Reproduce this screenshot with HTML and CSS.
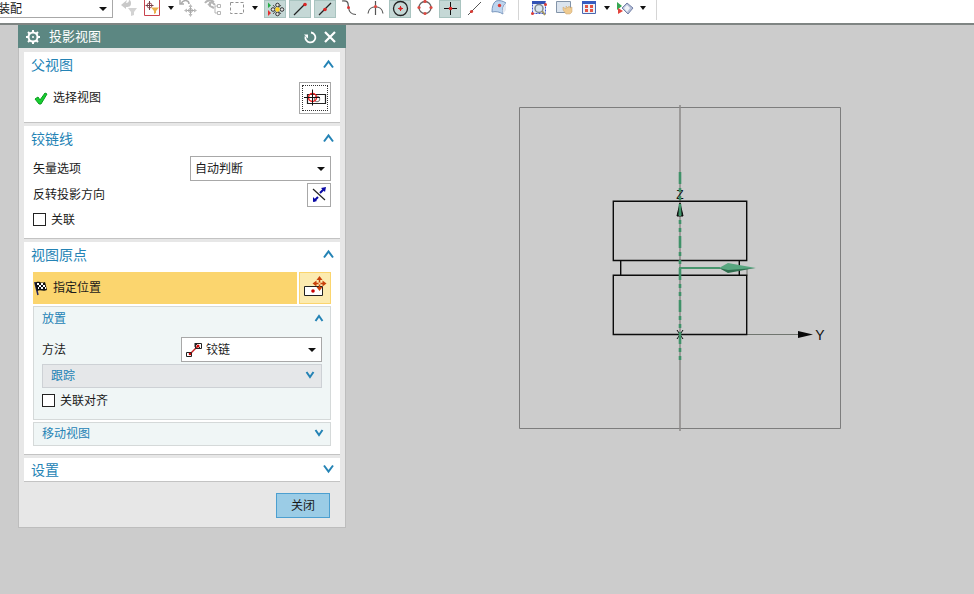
FILE: index.html
```html
<!DOCTYPE html>
<html lang="zh-CN">
<head>
<meta charset="utf-8">
<title>投影视图</title>
<link rel="stylesheet" href="styles.css">
</head>
<body>
<header class="toolbar">
  <span class="combo scope"><select aria-label="选择范围"><option>装配</option></select></span>
  <div class="tools filters">
    <button class="tool" aria-label="重置过滤器"><svg viewBox="0 0 22 18"><path d="M9 0 3 5l5 4V7c4 0 5-1 5-4 0-2-1-3-2-3 0 2-1 3-3 3z" fill="#c9c9c9"/><path d="M10 8h9l-3 4v3l-3 1v-4z" fill="#d3d3d3"/></svg></button>
    <button class="tool" aria-label="选择过滤器"><svg viewBox="0 0 22 18"><path d="M2.500-2h15v17.500h-15z" fill="#fff" stroke="#c9434e"/><circle cx="7.500" cy="5.500" r="2.500" fill="none" stroke="#a05058"/><path d="M7.500 1v9M3.500 5.500h8" stroke="#704048"/><path d="M9 7.500h8l-3 3.500v2l-2 1v-3z" fill="#eab04a"/></svg></button>
    <button class="caret" aria-label="更多过滤器"></button>
    <button class="tool" aria-label="重新定向"><svg viewBox="0 0 22 18" fill="none" stroke="#aaa"><path d="M3 4c2-5 8-4 8 0M2 0v4h4" stroke-width="1.500"/><path d="M12.500 5v11M7 10.500h11"/><path d="m12.500 4 2 3h-4zM12.500 17l2-3h-4zM6 10.500l3-2v4zM19 10.500l-3-2v4z" fill="#bbb" stroke="none"/><circle cx="12.500" cy="10.500" r="2"/></svg></button>
    <button class="tool" aria-label="装配导航"><svg viewBox="0 0 22 18" fill="none" stroke="#b5b5b5"><path d="M3 3c3-4 6-3 9-1M6 5l4-3 3 3M8 2v4l4 2" stroke-width="2"/><path d="M15.500 4.500h3v3h-3zM15.500 11.500h3v3h-3zM13 6h3M13 6v7h2"/></svg></button>
    <button class="tool" aria-label="矩形选择"><svg viewBox="0 0 22 18"><path d="M4.500 2.500h13v11h-13z" fill="none" stroke="#929292" stroke-dasharray="3 2"/></svg></button>
    <button class="caret" aria-label="更多选择方式"></button>
  </div>
  <div class="tools snaps">
    <button class="tool on" aria-label="启用捕捉点"><svg viewBox="0 0 22 18"><path d="M4 2.500 7 5.500 4 8z" fill="#24ad45"/><path d="M4 10 7 13l-3 3z" fill="#e42d2d"/><path d="m9 5 8 9m0-9-8 9" stroke="#555"/><g fill="#e4e4e4" stroke="#333"><circle cx="13.500" cy="5" r="1.800"/><circle cx="13.500" cy="14" r="1.800"/><circle cx="9" cy="9.500" r="1.800"/><circle cx="18" cy="9.500" r="1.800"/></g><circle cx="13.500" cy="9.500" r="2.200" fill="#ffd323"/></svg></button>
    <button class="tool on" aria-label="端点"><svg viewBox="0 0 22 18"><path d="m5 15 11-11" stroke="#222" stroke-width="1.200"/><circle cx="16" cy="4.500" r="1.800" fill="#db2424"/></svg></button>
    <button class="tool on" aria-label="中点"><svg viewBox="0 0 22 18"><path d="m5 15 12-12" stroke="#222" stroke-width="1.200"/><circle cx="11" cy="9.500" r="1.800" fill="#db2424"/></svg></button>
    <button class="tool" aria-label="控制点"><svg viewBox="0 0 22 18"><path d="M3 1c7-1 6 3 6.500 6.500S11 14.500 17 14.500" fill="none" stroke="#555" stroke-width="1.200"/><circle cx="9.500" cy="7.500" r="1.500" fill="#db3434"/></svg></button>
    <button class="tool" aria-label="交点"><svg viewBox="0 0 22 18"><path d="M11.500 1v14M4 13.500c1-9 14-9 15 0" fill="none" stroke="#555" stroke-width="1.200"/><circle cx="11.500" cy="6.500" r="1.600" fill="#e34b45"/></svg></button>
    <button class="tool on" aria-label="圆弧中心"><svg viewBox="0 0 22 18"><circle cx="11.500" cy="8.500" r="7" fill="none" stroke="#222" stroke-width="1.300"/><path d="M11.500 6v5M9 8.500h5" stroke="#db2424"/><circle cx="11.500" cy="8.500" r="1.500" fill="#db2424"/></svg></button>
    <button class="tool" aria-label="象限点"><svg viewBox="0 0 22 18"><circle cx="11" cy="7.500" r="6" fill="none" stroke="#666" stroke-width="1.300"/><g fill="#dc4a43"><circle cx="11" cy="1.500" r="1.600"/><circle cx="11" cy="13.500" r="1.600"/><circle cx="5" cy="7.500" r="1.600"/><circle cx="17" cy="7.500" r="1.600"/></g></svg></button>
    <button class="tool on" aria-label="现有点"><svg viewBox="0 0 22 18"><path d="M11.500 2v13M5 8.500h13" stroke="#111"/><circle cx="11.500" cy="8.500" r="1.800" fill="#db2424"/></svg></button>
    <button class="tool" aria-label="曲线上的点"><svg viewBox="0 0 22 18"><path d="M4 15 17 2" stroke="#555"/><circle cx="7.500" cy="11.500" r="1.600" fill="#dc3a32"/></svg></button>
    <button class="tool" aria-label="曲面上的点"><svg viewBox="0 0 22 18"><path d="M7 1c4-1 7 0 10 2-3 2-4 6-3 11-3-2-7-3-11-2 0-5 1-9 4-11z" fill="#bdd4ee" stroke="#7896bd"/><path d="M14 14c-1-4 0-8 3-11v7z" fill="#e6eaf2"/><circle cx="10.500" cy="5.500" r="1.700" fill="#dc3a32"/></svg></button>
  </div>
  <div class="tools views">
    <button class="tool" aria-label="缩放窗口"><svg viewBox="0 0 22 18"><path d="M4.500 1.500h13v12h-13z" fill="#e8eef8" stroke="#3a50d0" stroke-dasharray="2 1"/><path d="M4 1h13v3H4z" fill="#3152b5"/><circle cx="11" cy="8.500" r="4" fill="#d9e5ee" stroke="#7c8791" stroke-width="1.500"/><path d="m14 11 3 4" stroke="#9f9466" stroke-width="2"/><circle cx="4.500" cy="13.500" r="1.500" fill="#d93c38"/><circle cx="17.500" cy="4.500" r="1.500" fill="#d93c38"/></svg></button>
    <button class="tool" aria-label="平移"><svg viewBox="0 0 22 18"><path d="M3.500 1.500h14v11h-14z" fill="#dbe4ee" stroke="#8394a9"/><path d="m10 7 3 2V6l2 2 1-2 1 2 2-1v5l-2 2h-4l-3-4z" fill="#efcb91" stroke="#c8a36c" stroke-width=".5"/></svg></button>
    <button class="tool" aria-label="适合窗口"><svg viewBox="0 0 22 18"><path d="M4.500 1.500h13v12h-13z" fill="#edf2fa" stroke="#4a65ae"/><path d="M4 1h14v3H4z" fill="#375cc0"/><g fill="#e35445"><path d="M7 5h3v3H7zM12 5h3v3h-3zM7 9h3v3H7zM12 9h3v3h-3z"/></g></svg></button>
    <button class="caret" aria-label="更多视图操作"></button>
    <button class="tool" aria-label="渲染样式"><svg viewBox="0 0 22 18"><path d="m3 2 5 4-5 4z" fill="#35a651"/><path d="m4 8 5 3-5 3z" fill="#e2453e"/><path d="m13 3 6 5-5 6-6-6z" fill="#b5bfd8" stroke="#7481a8"/><path d="m13 5 3 3-3 4-3-4z" fill="#f0f2f8"/></svg></button>
    <button class="caret" aria-label="更多渲染样式"></button>
  </div>
</header>

<main class="workspace">
  <form class="dialog">
    <header class="titlebar">
      <svg class="gear" viewBox="0 0 16 16" fill="none" stroke="#fff"><circle cx="8" cy="8" r="4.500" stroke-width="2"/><circle cx="8" cy="8" r="1" fill="#fff" stroke="none"/><path d="M8 1v2M8 13v2M1 8h2M13 8h2M3 3l2 2M11 11l2 2M13 3l-2 2M5 11l-2 2" stroke-width="2"/></svg>
      <h1>投影视图</h1>
      <button type="button" class="win" aria-label="重置"><svg viewBox="0 0 14 14" fill="none" stroke="#fff"><path d="M8 2.500a5 5 0 1 1-5.500 4" stroke-width="1.800"/><path d="M1 4.500h4v4z" fill="#fff" stroke="none"/></svg></button>
      <button type="button" class="win" aria-label="关闭对话框"><svg viewBox="0 0 14 14" fill="none" stroke="#fff" stroke-width="2.200"><path d="m2 2 10 10M12 2 2 12"/></svg></button>
    </header>

    <section class="panel">
      <button type="button" class="head">父视图<svg viewBox="0 0 12 10"><path d="M1.500 8.500 6 2.500l4.500 6"/></svg></button>
      <div class="body">
        <div class="row">
          <svg class="mark" viewBox="0 0 16 16"><path d="m2 9 3-2 2 3 5-7 2 1-6 10H6z" fill="#17cf30" stroke="#0b9b20"/></svg>
          <span class="label">选择视图</span>
          <button type="button" class="icon large focus" aria-label="选择视图"><svg viewBox="0 0 24 24" fill="none"><path d="M4.500 8.500h18v9h-18z" stroke="#222" stroke-width="1.200"/><circle cx="14" cy="13" r="2.800" stroke="#777"/><circle cx="9.500" cy="11.500" r="4" stroke="#e22" stroke-width="1.500"/><path d="M9.500 3.500v16M1 11.500h16" stroke="#111"/></svg></button>
        </div>
      </div>
    </section>

    <section class="panel">
      <button type="button" class="head">铰链线<svg viewBox="0 0 12 10"><path d="M1.500 8.500 6 2.500l4.500 6"/></svg></button>
      <div class="body">
        <div class="row">
          <label class="label" for="vector">矢量选项</label>
          <span class="combo"><select id="vector"><option>自动判断</option></select></span>
        </div>
        <div class="row">
          <span class="label">反转投影方向</span>
          <button type="button" class="icon" aria-label="反转投影方向"><svg viewBox="0 0 22 22"><path d="m5 5 12 11" stroke="#222" stroke-width="1.200"/><path d="m16 5-4 4m-2 4-4 4" stroke="#0a0aa5" stroke-width="2"/><path d="m18 3-5 1 4 4zM5 18v-5l4 4z" fill="#0a0aa5"/></svg></button>
        </div>
        <label class="check"><input type="checkbox"><span>关联</span></label>
      </div>
    </section>

    <section class="panel">
      <button type="button" class="head">视图原点<svg viewBox="0 0 12 10"><path d="M1.500 8.500 6 2.500l4.500 6"/></svg></button>
      <div class="body">
        <div class="row step">
          <div class="active">
            <svg class="flag" viewBox="0 0 16 16"><path d="M2 2v1l3 12" stroke="#24245e" stroke-width="1.500" fill="none"/><path d="M2 3c4-3 6 1 10-1l2 8c-4 2-6-1-10 1z" fill="#111"/><path d="M4 3h2v2H4zM8 3h2v2H8zM6 5h2v2H6zM10 5h2v2h-2zM5 7h1v2H5zM8 7h2v2H8zM12 7h1v2h-1z" fill="#fff"/></svg>
            <span class="label">指定位置</span>
          </div>
          <button type="button" class="icon large gold" aria-label="指定位置"><svg viewBox="0 0 24 24"><path d="M1.500 10.500h18v9h-18z" fill="#fff" stroke="#222"/><circle cx="10" cy="15" r="1.800" fill="#c00"/><path d="M16.500 3v10M12 7.500h9" stroke="#c8400a" stroke-width="1.500"/><path d="m16.500 0 3 4h-6zM16.500 15l3-4h-6zM9.500 7.500l4-3v6zM23.500 7.500l-4-3v6z" fill="#c8400a"/><path d="M15.500 6.500h2v2h-2z" fill="#ffe0a0"/></svg></button>
        </div>
        <section class="group">
          <button type="button" class="subhead">放置<svg viewBox="0 0 10 8"><path d="M1.500 7 5 2l3.500 5"/></svg></button>
          <div class="groupbody">
            <div class="row">
              <label class="label" for="method">方法</label>
              <span class="combo pictured"><svg viewBox="0 0 16 16"><path d="m4 12 8-8" stroke="#c22" stroke-width="1.500"/><path d="M.500 10.500h5v4h-5zM9.500 1.500h6v5h-6z" fill="none" stroke="#222"/><path d="m9 1 6 6M9 5V1" stroke="#222" fill="none"/><circle cx="4" cy="12" r="1.300" fill="#c00"/><circle cx="12" cy="4" r="1.500" fill="#c00"/></svg><select id="method"><option>铰链</option></select></span>
            </div>
            <button type="button" class="subhead bar dim">跟踪<svg viewBox="0 0 10 8"><path d="m1.500 1 3.500 5 3.500-5"/></svg></button>
            <label class="check"><input type="checkbox"><span>关联对齐</span></label>
          </div>
        </section>
        <button type="button" class="subhead bar">移动视图<svg viewBox="0 0 10 8"><path d="m1.500 1 3.500 5 3.500-5"/></svg></button>
      </div>
    </section>

    <section class="panel closed">
      <button type="button" class="head">设置<svg viewBox="0 0 12 10"><path d="m1.500 1.500 4.500 6 4.500-6"/></svg></button>
    </section>

    <footer><button type="button" class="close">关闭</button></footer>
  </form>

  <svg class="drawing" viewBox="518 104 324 328" role="img" aria-label="图纸视图">
    <path d="M519.500 107.500h321v321h-321z" fill="none" stroke="#7d7d7d"/>
    <path d="M680 105v326" stroke="#8d8a89" stroke-width="1.500"/>
    <path d="M747 334.500h55M747 268v8" stroke="#70756f"/>
    <path d="M613.300 201.300h133.400v59.200H613.300zM613.300 275.300h133.400v59.200H613.300zM620.700 260.500v15M739.300 260.500v15" fill="none" stroke="#0b0b0b" stroke-width="1.400"/>
    <path d="m798 331 15 3.500-15 3.500z" fill="#080808"/>
    <path d="m680 203 3 13h-6zM677 330l6 9m0-9-6 9" fill="#080808" stroke="#080808"/>
    <text x="680" y="199" class="axis z">Z</text>
    <path d="M680 172v188" stroke="#3f9168" stroke-width="2.600" stroke-dasharray="12 4 4 4 4 4"/>
    <path d="m680 203 1.500 12h-3z" fill="#3f9168"/>
    <path d="M679 268h41" stroke="#48956d" stroke-width="2"/>
    <path d="m719 268 9-5 11 2 17 3-17 2-11 2z" fill="#58a780"/>
    <path d="m719 268 9 2 27-2-16 3-11 2z" fill="#2f6e4e"/>
    <text x="820" y="340" class="axis">Y</text>
  </svg>
</main>
</body>
</html>
```
FILE: styles.css
```css
* { box-sizing: border-box; }

body {
  margin: 0;
  min-height: 100vh;
  display: flex;
  flex-direction: column;
  overflow: hidden;
  background: #ccc;
  color: #1a1a1a;
  font: 12px/16px "Noto Sans CJK SC", sans-serif;
}

button, select, input { font: inherit; color: inherit; margin: 0; }
button { padding: 0; border: 0; background: none; }
h1 { margin: 0; font-weight: 400; }
svg { display: block; }

/* Toolbar */
.toolbar {
  display: flex;
  align-items: flex-start;
  height: 25px;
  background: #fff;
  border-bottom: 2px solid #7f8583;
}
.tools { display: flex; height: 20px; }
.filters { gap: 2px; margin-left: 5px; }
.snaps { gap: 3px; margin-left: 4px; padding-right: 7px; border-right: 1px solid #d5d5d5; }
.views { gap: 3px; margin-left: 9px; padding-right: 9px; border-right: 1px solid #d5d5d5; }
.tool { width: 22px; height: 18px; }
.tool svg { width: 22px; height: 18px; }
.on { background: #c5d8d6; box-shadow: inset 0 0 0 1px #a9c4c0; }
.caret { width: 10px; height: 16px; }
.views .caret { width: 8px; }
.caret::before {
  content: "";
  display: block;
  margin: 0 auto;
  width: 6px;
  height: 4px;
  background: #111;
  clip-path: polygon(0 0, 100% 0, 50% 100%);
}

/* Drop-downs */
.combo {
  position: relative;
  display: flex;
  align-items: center;
  width: 141px;
  height: 25px;
  background: #fff;
  border: 1px solid #a8a8a8;
}
.combo::after {
  content: "";
  position: absolute;
  right: 5px;
  top: 10px;
  width: 8px;
  height: 4px;
  background: #111;
  clip-path: polygon(0 0, 100% 0, 50% 100%);
  pointer-events: none;
}
.combo select {
  flex: 1;
  height: 100%;
  padding: 0 16px 2px 4px;
  border: 0;
  background: none;
  appearance: none;
}
.scope { width: 115px; height: 18px; margin-left: -2px; border-top: 0; border-left: 0; }
.scope select { padding: 0 0 2px; }
.scope::after { top: 7px; }
.pictured svg { width: 16px; height: 16px; margin-left: 4px; }

/* Workspace */
.workspace { flex: 1; display: flex; align-items: flex-start; }
.drawing { flex: none; width: 324px; height: 328px; margin: 79px 0 0 172px; }
.axis { font: 14px "Liberation Sans", sans-serif; text-anchor: middle; fill: #111; }
.z { font-size: 12px; }

/* Dialog */
.dialog {
  flex: none;
  width: 328px;
  margin-left: 18px;
  padding-bottom: 9px;
  background: #e7e7e7;
  border: 1px solid #bdbdbd;
  border-top: 0;
}
.titlebar {
  display: flex;
  align-items: center;
  gap: 6px;
  height: 23px;
  margin: 0 -1px 4px;
  padding: 0 9px 0 7px;
  background: #5c8782;
  color: #fff;
}
.titlebar h1 { flex: 1; padding: 0 0 2px 2px; font-size: 13px; }
.gear { width: 16px; height: 16px; }
.win svg { width: 14px; height: 14px; }

.panel {
  margin: 0 5px 3px;
  background: #fff;
  border-bottom: 1px solid #c3c3c3;
}
.head, .subhead {
  display: flex;
  align-items: center;
  justify-content: space-between;
  width: 100%;
  padding-bottom: 2px;
  color: #2483b5;
}
.head { height: 26px; padding-left: 7px; padding-right: 5px; font-size: 14px; }
.head svg { width: 13px; height: 10px; }
.head path, .subhead path { fill: none; stroke: #2483b5; stroke-width: 2; }
.body { display: grid; gap: 2px; padding: 4px 9px 8px; }
.row { display: flex; align-items: center; }
.label { flex: 1; padding-bottom: 2px; }
.mark { width: 16px; height: 16px; margin-right: 4px; }

.icon {
  display: grid;
  place-items: center;
  width: 24px;
  height: 24px;
  background: #fff;
  border: 1px solid #a8a8a8;
}
.icon svg { width: 22px; height: 22px; }
.large { width: 32px; height: 32px; }
.large svg { width: 24px; height: 24px; }
.focus { outline: 1px dotted #333; outline-offset: -4px; }
.gold { background: #fcebb0; border-color: #fbd56e; }

.check { display: flex; align-items: center; gap: 5px; height: 21px; }
.check span { padding-bottom: 2px; }
.check input {
  width: 13px;
  height: 13px;
  appearance: none;
  background: #fff;
  border: 1px solid #222;
}

.step { gap: 2px; }
.active {
  flex: 1;
  display: flex;
  align-items: center;
  gap: 4px;
  height: 32px;
  background: #fbd56e;
}
.flag { width: 16px; height: 16px; }

.group { background: #f0f6f6; border: 1px solid #d5d9d9; }
.subhead { height: 24px; padding-left: 8px; padding-right: 6px; }
.subhead svg { width: 10px; height: 8px; }
.groupbody { display: grid; gap: 2px; padding: 6px 8px 8px; }
.bar { background: #f0f6f6; border: 1px solid #d5d9d9; }
.dim { background: #e5e7e9; border-color: #cdd1d5; }

.closed .head { height: 23px; }

footer { display: flex; justify-content: flex-end; padding: 8px 15px 0; }
.close {
  width: 54px;
  height: 25px;
  padding-bottom: 2px;
  background: #9bcce6;
  border: 1px solid #4c9fd0;
}
```
